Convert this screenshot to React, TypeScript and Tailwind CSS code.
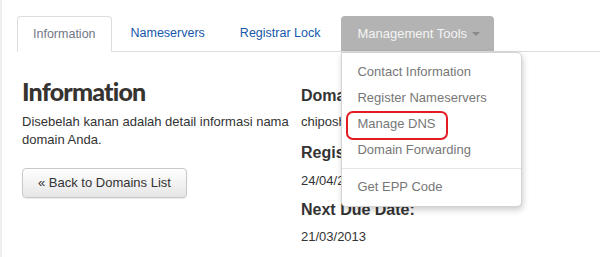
export default function App() {
  const menu = ['Contact Information', 'Register Nameservers', 'Manage DNS', 'Domain Forwarding']

  return (
    <div
      className="w-[600px] h-[257px] overflow-hidden bg-white border-l-2 border-[#eeeeee] text-[#333] text-[13px]"
      style={{ fontFamily: '"Liberation Sans", Arial, sans-serif' }}
    >
      {/* Tabs */}
      <div className="pl-[15px] pt-4">
        <ul className="flex gap-[2px] border-b border-[#dddddd] h-[36px] text-[12.5px]">
          <li className="relative -mb-px h-[36px] px-[15px] flex items-center rounded-t-[4px] border border-[#dddddd] border-b-white bg-white text-[#717786]">
            Information
          </li>
          <li className="h-[35px] pl-[17px] pr-[16px] flex items-center text-[#1558a9]">Nameservers</li>
          <li className="h-[35px] pl-[17px] pr-[19px] flex items-center text-[#1558a9]">Registrar Lock</li>
          <li className="relative">
            <div className="h-[35px] pl-4 pr-[14px] flex items-center gap-[5px] rounded-t-[4px] bg-[#b3b3b3] text-[13px] text-[#f4f4f4]">
              Management Tools
              <span className="w-0 h-0 border-x-[4px] border-x-transparent border-t-[4px] border-t-[#8a8a8a] mt-[1px]" />
            </div>

            {/* Dropdown */}
            <div className="absolute left-0 top-[36px] z-10 w-[181px] py-[6px] bg-white border border-[#d3d3d3] rounded-b-[5px] rounded-tr-[5px] shadow-[1px_3px_6px_rgba(0,0,0,0.2)] text-[13px] text-[#777777]">
              {menu.map((m) => (
                <div key={m} className="relative h-[26px] pl-[15px] flex items-center whitespace-nowrap">
                  {m}
                  {m === 'Manage DNS' && (
                    <span className="absolute left-[4px] top-0 w-[102px] h-[29px] border-2 border-[#e31b23] rounded-[7px]" />
                  )}
                </div>
              ))}
              <div className="my-[5px] h-px bg-[#e5e5e5]" />
              <div className="h-[26px] pl-[15px] flex items-center">Get EPP Code</div>
            </div>
          </li>
        </ul>
      </div>

      {/* Content */}
      <div className="flex pl-5 pt-[24px]">
        <div className="w-[279px]">
          <h1 className="text-[25px] leading-[30px] font-black tracking-[-0.8px] text-[#363330]" style={{ fontFamily: 'Lato, sans-serif' }}>
            Information
          </h1>
          <p className="mt-[7px] leading-[18px]">
            Disebelah kanan adalah detail informasi nama domain Anda.
          </p>
          <button className="mt-[19px] h-[30px] px-[15px] rounded-[4px] border border-[#c8c8c8] bg-gradient-to-b from-white to-[#e6e6e6] text-[13px] text-[#333] shadow-[0_1px_1px_rgba(0,0,0,0.08)]">
            « Back to Domains List
          </button>
        </div>

        <div className="pt-[10px]">
          <h4 className="text-[16px] leading-5 font-bold">Domain Name:</h4>
          <p className="mt-[6px] leading-5">chiposhop.com</p>
          <h4 className="mt-[11px] text-[16px] leading-5 font-bold">Registration Date:</h4>
          <p className="mt-[8px] leading-5">24/04/2012</p>
          <h4 className="mt-[9px] text-[16px] leading-5 font-bold">Next Due Date:</h4>
          <p className="mt-[7px] leading-5">21/03/2013</p>
        </div>
      </div>
    </div>
  )
}
